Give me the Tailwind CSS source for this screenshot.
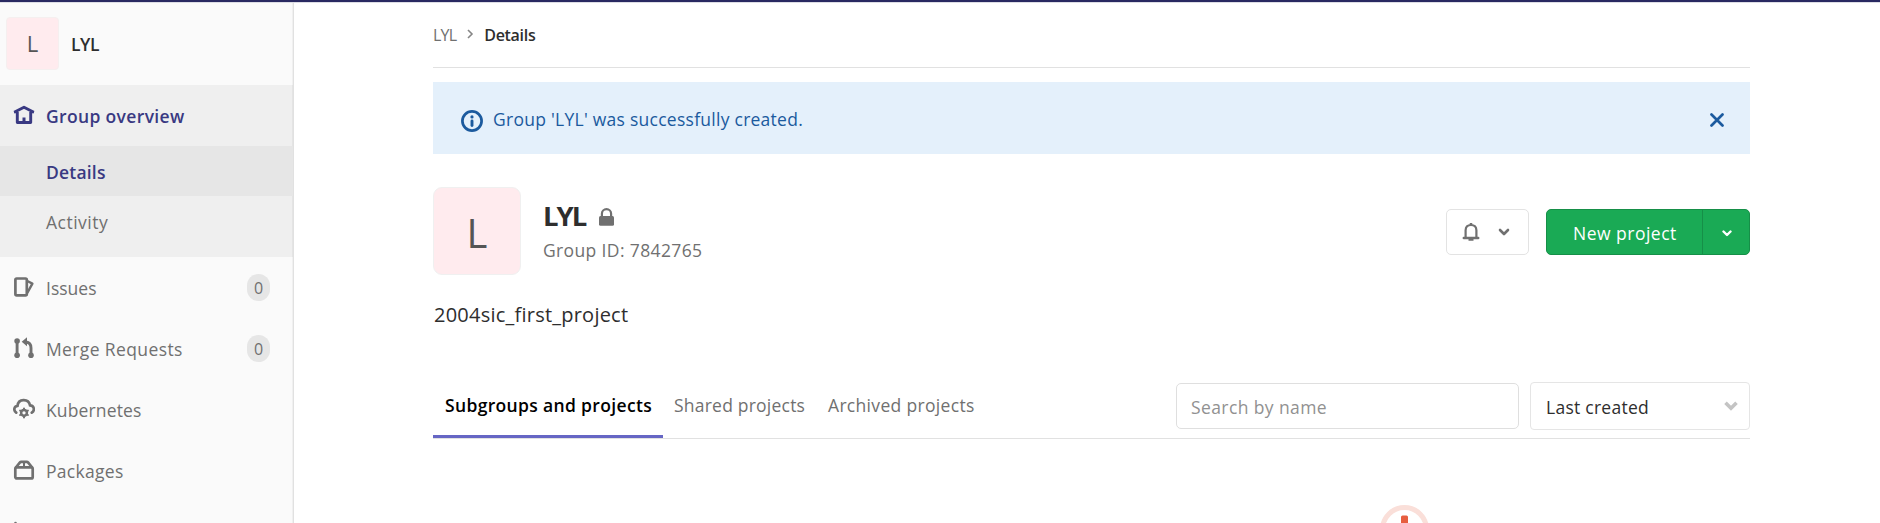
<!DOCTYPE html>
<html lang="en">
<head>
<meta charset="utf-8">
<title>LYL · GitLab</title>
<script src="https://cdn.jsdelivr.net/npm/@tailwindcss/browser@4"></script>
</head>
<body class="bg-white h-[523px] overflow-hidden flex flex-col font-['Open_Sans',sans-serif] text-[17.5px] text-[#2e2e2e]">
<div class="h-[3px] shrink-0 bg-[#292961] border-b border-[#dddde5]"></div>
<div class="flex flex-1 min-h-0">
  <aside class="w-[294px] shrink-0 bg-[#fafafa] border-r border-[#e1e1e1] shadow-[inset_-1px_0_0_#f0f0f0] overflow-hidden text-[#707070]">
    <div class="h-[82px] flex items-start pl-[6px] pt-[14px]">
      <div class="w-[53px] h-[53px] rounded-[4px] bg-[#ffebee] border border-[#f5efef] text-[#555] text-[22px] leading-[51px] text-center">L</div>
      <div class="ml-3 leading-[53px] pt-px font-semibold text-[#2e2e2e] tracking-[-0.4px]">LYL</div>
    </div>
    <div class="bg-[#efefef] h-[172px] shadow-[inset_-1px_0_0_#e4e4e4]">
      <div class="h-[61px] flex items-center pl-[13px] text-[#393982] font-semibold">
        <svg class="w-[22px] h-[22px] -mt-0.5" viewBox="0 0 22 22" fill="none" stroke="currentColor" stroke-width="2.900"><path d="M1.200 8.300 11 3.200l9.800 5.100M4.300 8v10.500h13.400V8M2.500 7.500v1.800M19.500 7.500v1.800" stroke-linejoin="round"/><path d="M11 18v-4.500" stroke-width="3"/></svg>
        <span class="ml-[11px] pt-[2px] tracking-[0.35px]">Group overview</span>
      </div>
      <div class="h-[50px] bg-[#e6e6e6] pl-[46px] leading-[50px] pt-px text-[#393982] font-semibold tracking-[0.2px]">Details</div>
      <div class="h-[50px] pl-[46px] leading-[50px] pt-px tracking-[0.5px]">Activity</div>
    </div>
    <div class="h-[61px] flex items-center pl-[13px]">
      <svg class="w-[22px] h-[22px] -mt-0.5" viewBox="0 0 22 22" fill="none" stroke="currentColor" stroke-width="2.700" stroke-linejoin="round"><rect x="2.400" y="2.500" width="11.400" height="16.800" rx="1.300"/><path d="M14.300 5 19.400 7.600 14.300 16.800" stroke-width="2.400"/></svg>
      <span class="ml-[11px] pt-[2px]">Issues</span>
      <span class="ml-auto mr-[23px] w-[23px] h-[27px] rounded-[12px] bg-[#e6e6e6] text-[16px] leading-[28px] text-center">0</span>
    </div>
    <div class="h-[61px] flex items-center pl-[13px]">
      <svg class="w-[22px] h-[22px] -mt-0.5" viewBox="0 0 22 22" fill="none" stroke="currentColor" stroke-width="2.900"><path d="M4.100 4v14M18 18v-7q0-5.500-5-6"/><g fill="currentColor" stroke="none"><circle cx="4.100" cy="4" r="2.800"/><circle cx="4.100" cy="18.200" r="2.800"/><circle cx="18" cy="18.200" r="2.800"/><path d="M8.700 4.800 14 .3v9z"/></g></svg>
      <span class="ml-[11px] pt-[2px] tracking-[0.38px]">Merge Requests</span>
      <span class="ml-auto mr-[23px] w-[23px] h-[27px] rounded-[12px] bg-[#e6e6e6] text-[16px] leading-[28px] text-center">0</span>
    </div>
    <div class="h-[61px] flex items-center pl-[13px]">
      <svg class="w-[22px] h-[22px] -mt-0.5" viewBox="0 0 22 22" fill="none" stroke="currentColor" stroke-width="2.700" stroke-linecap="round"><path d="M3.200 14.600C.3 12.500.8 8.300 4.500 7.800 5.300.3 15.500.1 17 7.300c4.400.3 5 5.300 1.800 7.400"/><circle cx="11" cy="14.800" r="2.900" stroke-width="2.500"/><path d="M11 10.400v1M11 18.200v1.200M7.100 12.600l.7.400M14.200 16.600l.7.400M14.900 12.600l-.7.400M7.800 16.600l-.7.400" stroke-width="2"/></svg>
      <span class="ml-[11px] pt-[2px] tracking-[0.14px]">Kubernetes</span>
    </div>
    <div class="h-[61px] flex items-center pl-[13px]">
      <svg class="w-[22px] h-[22px] -mt-0.5" viewBox="0 0 22 22" fill="none" stroke="currentColor" stroke-width="2.700" stroke-linejoin="round"><rect x="2.300" y="8.400" width="17.400" height="11" rx="1.500"/><path d="M2.800 8.500 7 3.300q.4-.5 1.200-.5h5.600q.8 0 1.200.5l4.200 5.200"/><path d="M11 2.800v5.500" stroke-width="2"/></svg>
      <span class="ml-[11px] pt-[2px] tracking-[0.3px]">Packages</span>
    </div>
    <div class="pl-[13px] pt-[20px]">
      <svg class="w-[22px] h-[4px]" viewBox="0 0 22 4" fill="none" stroke="currentColor" stroke-width="2.600" stroke-linecap="round"><path d="M2.500 2v8"/></svg>
    </div>
  </aside>

  <main class="ml-[139px] w-[1317px] shrink-0 overflow-hidden">
    <nav class="h-[65px] border-b border-[#e1e1e1] flex items-center text-[16px]">
      <span class="text-[#707070] tracking-[-0.8px]">LYL</span>
      <svg class="ml-[10px] mt-[-2px] w-[8px] h-[10px]" viewBox="0 0 8 10" fill="none" stroke="#868686" stroke-width="1.600"><path d="M2 1l4 4-4 4"/></svg>
      <span class="ml-[10px] font-semibold tracking-[-0.3px]">Details</span>
    </nav>
    <div class="mt-[14px] h-[72px] bg-[#e4f0fb] flex items-center text-[#1b5a9e]">
      <svg class="ml-[28px] mt-[5px] w-[22px] h-[22px]" viewBox="0 0 22 22"><circle cx="11" cy="11" r="9.600" fill="none" stroke="currentColor" stroke-width="2.700"/><circle cx="11" cy="6.900" r="1.600" fill="currentColor"/><path d="M11 11v4.500" stroke="currentColor" stroke-width="2.900" stroke-linecap="round"/></svg>
      <span class="ml-[10px] tracking-[0.26px] pt-[3px]">Group 'LYL' was successfully created.</span>
      <svg class="ml-auto mr-[26px] mt-[4px] w-[14px] h-[14px]" viewBox="0 0 14 14" stroke="currentColor" stroke-width="2.700" stroke-linecap="round"><path d="M1.500 1.500l11 11M12.500 1.500l-11 11"/></svg>
    </div>
    <div class="mt-[33px] flex items-start h-[88px]">
      <div class="w-[88px] h-[88px] rounded-[9px] bg-[#ffebee] border border-[#f0f0f0] text-[#555] text-[40px] leading-[90px] text-center">L</div>
      <div class="ml-[22px] pt-[10px]">
        <div class="flex items-center h-[38px]">
          <h1 class="font-bold text-[27.5px] leading-[38px] tracking-[-2px]">LYL</h1>
          <svg class="ml-[14px] mt-[2px] w-[15px] h-[18px]" viewBox="0 0 15 18"><rect y="8" width="15" height="9.800" rx="1.500" fill="#707070"/><path d="M2.900 9V5.800a4.600 4.600 0 0 1 9.200 0V9" fill="none" stroke="#707070" stroke-width="2.200"/></svg>
        </div>
        <div class="leading-[28px] pt-px text-[#707070] tracking-[0.37px]">Group ID: 7842765</div>
      </div>
      <div class="ml-auto mt-[22px] flex">
        <div class="w-[83px] h-[46px] rounded-[5px] border border-[#e3e3e3] flex items-center pl-[15px]">
          <svg class="w-[18px] h-[20px]" viewBox="0 0 18 20" fill="none" stroke="#707070" stroke-width="2.200"><path d="M3.600 15.500V8.200Q3.800 3 9 3t5.400 5.200v7.300"/><path d="M1.800 16h14.400" stroke-width="2.500" stroke-linecap="round"/><path d="M9 1v2M6.500 17.500h5" stroke-width="2.500"/></svg>
          <svg class="ml-[18px] w-[12px] h-[8px]" viewBox="0 0 12 8" fill="none" stroke="#707070" stroke-width="2.600" stroke-linecap="round" stroke-linejoin="round"><path d="M2 2l4 4 4-4"/></svg>
        </div>
        <div class="ml-[17px] w-[204px] h-[46px] rounded-[5px] bg-[#1aaa55] border border-[#168f48] text-white flex items-stretch">
          <span class="w-[156px] border-r border-[#168f48] pl-[26px] leading-[46px] tracking-[0.49px]">New project</span>
          <span class="flex-1 flex items-center justify-center pl-[2px] pt-[3px]"><svg class="w-[10px] h-[7px]" viewBox="0 0 10 7" fill="none" stroke="white" stroke-width="2.400" stroke-linecap="round" stroke-linejoin="round"><path d="M1.500 1.500L5 5l3.500-3.500"/></svg></span>
        </div>
      </div>
    </div>
    <p class="mt-[24px] text-[20px] leading-[30px] pt-px pl-px tracking-[0.23px]">2004sic_first_project</p>
    <div class="mt-[53px] h-[56px] border-b border-[#e1e1e1] flex items-start">
      <div class="flex h-[55px] leading-[45px] text-[#707070]">
        <span class="h-[55px] w-[230px] pl-[12px] border-b-[3px] border-[#6666c4] text-black font-semibold tracking-[0.34px] whitespace-nowrap">Subgroups and projects</span>
        <span class="pl-[11px] w-[153px] tracking-[0.22px]">Shared projects</span>
        <span class="pl-[12px] tracking-[0.32px]">Archived projects</span>
      </div>
      <div class="ml-auto flex items-start -mt-px">
        <div class="mt-px w-[343px] h-[46px] border border-[#dfdfdf] rounded-[5px] pl-[14px] leading-[46px] text-[#919191] tracking-[0.4px]">Search by name</div>
        <div class="ml-[11px] w-[220px] h-[48px] border border-[#e5e5e5] rounded-[4px] pl-[15px] pr-[11px] flex items-center tracking-[0.26px]"><span class="pt-[2px]">Last created</span>
          <svg class="ml-auto w-[14px] h-[10px]" viewBox="0 0 14 10" fill="none" stroke="#c4c4c4" stroke-width="3.600"><path d="M1.500 1.700L7 7.200l5.500-5.500"/></svg>
        </div>
      </div>
    </div>
    <div class="mt-[66px] pl-[947px]">
      <svg class="w-[50px] h-[18px]" viewBox="0 0 50 18"><circle cx="24.500" cy="24.500" r="22" fill="none" stroke="#fadfd9" stroke-width="5"/><rect x="21" y="10.500" width="7" height="20" rx="1.500" fill="#e75e40"/></svg>
    </div>
  </main>
</div>
</body>
</html>
